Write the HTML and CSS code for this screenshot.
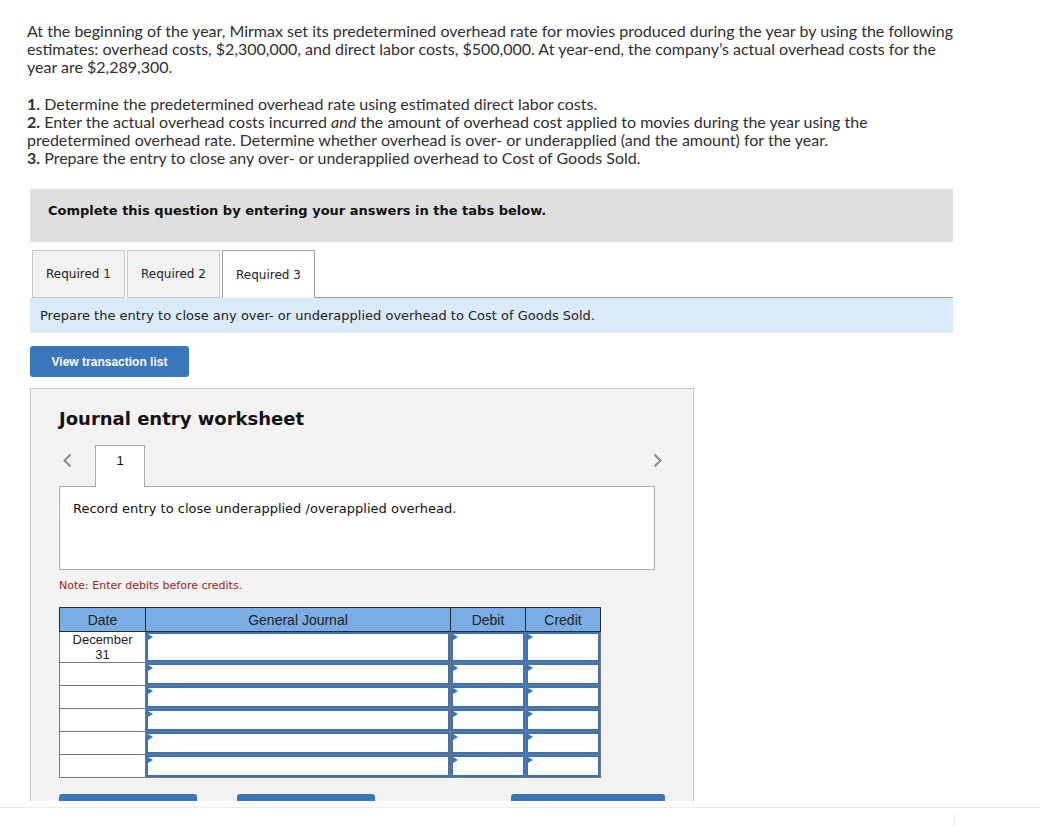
FILE: index.html
```html
<!DOCTYPE html>
<html>
<head>
<meta charset="utf-8">
<link rel="stylesheet" href="styles.css">
</head>
<body>
<div class="viewport">
  <div class="question">
    <p>At the beginning of the year, Mirmax set its predetermined overhead rate for movies produced during the year by using the following<br>estimates: overhead costs, $2,300,000, and direct labor costs, $500,000. At year-end, the company’s actual overhead costs for the<br>year are $2,289,300.</p>
    <p><b>1.</b> Determine the predetermined overhead rate using estimated direct labor costs.<br><b>2.</b> Enter the actual overhead costs incurred <i>and</i> the amount of overhead cost applied to movies during the year using the<br>predetermined overhead rate. Determine whether overhead is over- or underapplied (and the amount) for the year.<br><b>3.</b> Prepare the entry to close any over- or underapplied overhead to Cost of Goods Sold.</p>
  </div>
  <div class="work">
    <div class="instruct">Complete this question by entering your answers in the tabs below.</div>
    <div class="tabs">
      <div class="tab">Required 1</div>
      <div class="tab">Required 2</div>
      <div class="tab active">Required 3</div>
      <div class="tabfill"></div>
    </div>
    <div class="prompt">Prepare the entry to close any over- or underapplied overhead to Cost of Goods Sold.</div>
    <button class="btn-list">View transaction list</button>
    <div class="panel">
      <h2 class="ws-title">Journal entry worksheet</h2>
      <div class="nav">
        <div class="nav-left">
          <svg class="chev" width="10" height="15" viewBox="0 0 10 15"><polyline points="8.5,1.5 2.5,7.5 8.5,13.5" fill="none" stroke="#8c8c8c" stroke-width="2"/></svg>
        </div>
        <div class="etab">1</div>
        <div class="nav-fill"></div>
        <svg class="chev chev-r" width="10" height="15" viewBox="0 0 10 15"><polyline points="1.5,1.5 7.5,7.5 1.5,13.5" fill="none" stroke="#8c8c8c" stroke-width="2"/></svg>
      </div>
      <div class="entrybox">Record entry to close underapplied /overapplied overhead.</div>
      <div class="note">Note: Enter debits before credits.</div>
      <table class="journal">
        <colgroup>
          <col class="c-date"><col class="c-gj"><col class="c-amt"><col class="c-amt">
        </colgroup>
        <thead>
          <tr><th>Date</th><th>General Journal</th><th>Debit</th><th>Credit</th></tr>
        </thead>
        <tbody>
          <tr class="first"><td class="date">December<br>31</td><td class="in"><div class="box"></div></td><td class="in"><div class="box"></div></td><td class="in"><div class="box"></div></td></tr>
          <tr><td class="date"></td><td class="in"><div class="box"></div></td><td class="in"><div class="box"></div></td><td class="in"><div class="box"></div></td></tr>
          <tr><td class="date"></td><td class="in"><div class="box"></div></td><td class="in"><div class="box"></div></td><td class="in"><div class="box"></div></td></tr>
          <tr><td class="date"></td><td class="in"><div class="box"></div></td><td class="in"><div class="box"></div></td><td class="in"><div class="box"></div></td></tr>
          <tr><td class="date"></td><td class="in"><div class="box"></div></td><td class="in"><div class="box"></div></td><td class="in"><div class="box"></div></td></tr>
          <tr><td class="date"></td><td class="in"><div class="box"></div></td><td class="in"><div class="box"></div></td><td class="in"><div class="box"></div></td></tr>
        </tbody>
      </table>
      <div class="actions">
        <span class="abtn"></span>
        <span class="abtn second"></span>
        <span class="abtn third"></span>
      </div>
    </div>
  </div>
</div>
<div class="footer"><span class="divider"></span></div>
</body>
</html>
```

FILE: styles.css
```css
* { box-sizing: border-box; }
body { margin: 0; background: #fff; }

.viewport { height: 801px; overflow: hidden; }

.question {
  padding: 22px 0 0 27px;
  font-family: Lato, "Open Sans", sans-serif;
  font-size: 16px;
  line-height: 18px;
  color: #2f2f2f;
  white-space: nowrap;
}
.question p { margin: 0; }
.question p + p { margin-top: 19px; }

.work {
  margin: 22px 0 0 30px;
  width: 923px;
  font-family: "DejaVu Sans", Verdana, sans-serif;
  color: #222;
}

.instruct {
  height: 53px;
  background: #dfdfdf;
  padding: 14px 0 0 18px;
  font-weight: bold;
  font-size: 13px;
  line-height: 16px;
  color: #111;
}

.tabs { display: flex; margin-top: 8px; }
.tab {
  width: 93px;
  height: 48px;
  margin-left: 2px;
  border: 1px solid #c6c6c6;
  background: #f2f2f2;
  display: flex;
  align-items: center;
  justify-content: center;
  font-size: 12px;
  color: #222;
}
.tab.active {
  background: #fff;
  border-color: #a0a0a0;
  border-bottom: none;
}
.tabfill { flex: 1; border-bottom: 1px solid #a0a0a0; }

.prompt {
  height: 35px;
  background: #dbeaf8;
  padding-left: 10px;
  display: flex;
  align-items: center;
  font-size: 13px;
  color: #222;
}

.btn-list {
  display: block;
  margin-top: 13px;
  width: 159px;
  height: 31px;
  border: none;
  border-radius: 3px;
  background: #3a76ba;
  color: #fff;
  font-family: "Liberation Sans", Arial, sans-serif;
  font-weight: bold;
  font-size: 12px;
  padding: 0;
}

.panel {
  margin-top: 11px;
  width: 664px;
  height: 430px;
  border: 1px solid #c8c8c8;
  background: #f2f2f2;
  padding: 18px 0 0 28px;
}
.ws-title {
  margin: 0;
  font-size: 18px;
  line-height: 24px;
  font-weight: bold;
  color: #111;
}

.nav { display: flex; margin-top: 14px; width: 604px; align-items: flex-start; }
.nav-left { width: 36px; }
.chev { display: block; margin: 8px 0 0 3px; }
.chev-r { margin: 8px 0 0 0; }
.nav-fill { flex: 1; }
.etab {
  width: 50px;
  height: 42px;
  margin-bottom: -1px;
  border: 1px solid #aaa;
  border-bottom: none;
  background: #fff;
  text-align: center;
  padding-top: 7px;
  font-family: "Liberation Sans", Arial, sans-serif;
  font-size: 13px;
  line-height: 16px;
  color: #111;
  position: relative;
  z-index: 1;
}

.entrybox {
  width: 596px;
  height: 84px;
  border: 1px solid #aaa;
  background: #fff;
  padding: 14px 0 0 13px;
  font-size: 13px;
  line-height: 16px;
  color: #111;
}

.note {
  margin-top: 8px;
  font-size: 11px;
  line-height: 16px;
  color: #9b2525;
}

.journal {
  margin-top: 13px;
  border-collapse: collapse;
  table-layout: fixed;
  width: 541px;
  font-family: "Liberation Sans", Arial, sans-serif;
  color: #222;
}
.c-date { width: 86px; }
.c-gj { width: 305px; }
.c-amt { width: 75px; }
.journal th {
  height: 24px;
  padding: 0;
  background: #79ade3;
  border: 1px solid #2a2a2a;
  font-weight: normal;
  font-size: 14px;
}
.journal td {
  border: 1px solid #777;
  padding: 0;
  background: #fff;
}
.journal td.date {
  text-align: center;
  vertical-align: top;
  font-size: 13px;
  line-height: 15px;
  padding-top: 0;
}
.box {
  height: 22px;
  border: 2px solid #3b73b9;
  position: relative;
}
.first .box { height: 30px; }
.box::before {
  content: "";
  position: absolute;
  left: 0;
  top: 0;
  border-left: 5px solid #3b73b9;
  border-top: 3px solid transparent;
  border-bottom: 3px solid transparent;
}

.actions { display: flex; margin-top: 16px; }
.abtn {
  display: block;
  width: 138px;
  height: 30px;
  background: #3a76ba;
  border-radius: 3px 3px 0 0;
}
.abtn.second { margin-left: 40px; }
.abtn.third { margin-left: 136px; width: 154px; }

.footer {
  margin-top: 6px;
  border-top: 1px solid #ececec;
  height: 19px;
  padding-top: 5px;
}
.divider {
  display: block;
  margin-left: 954px;
  width: 1px;
  height: 14px;
  background: #ececec;
}
```
